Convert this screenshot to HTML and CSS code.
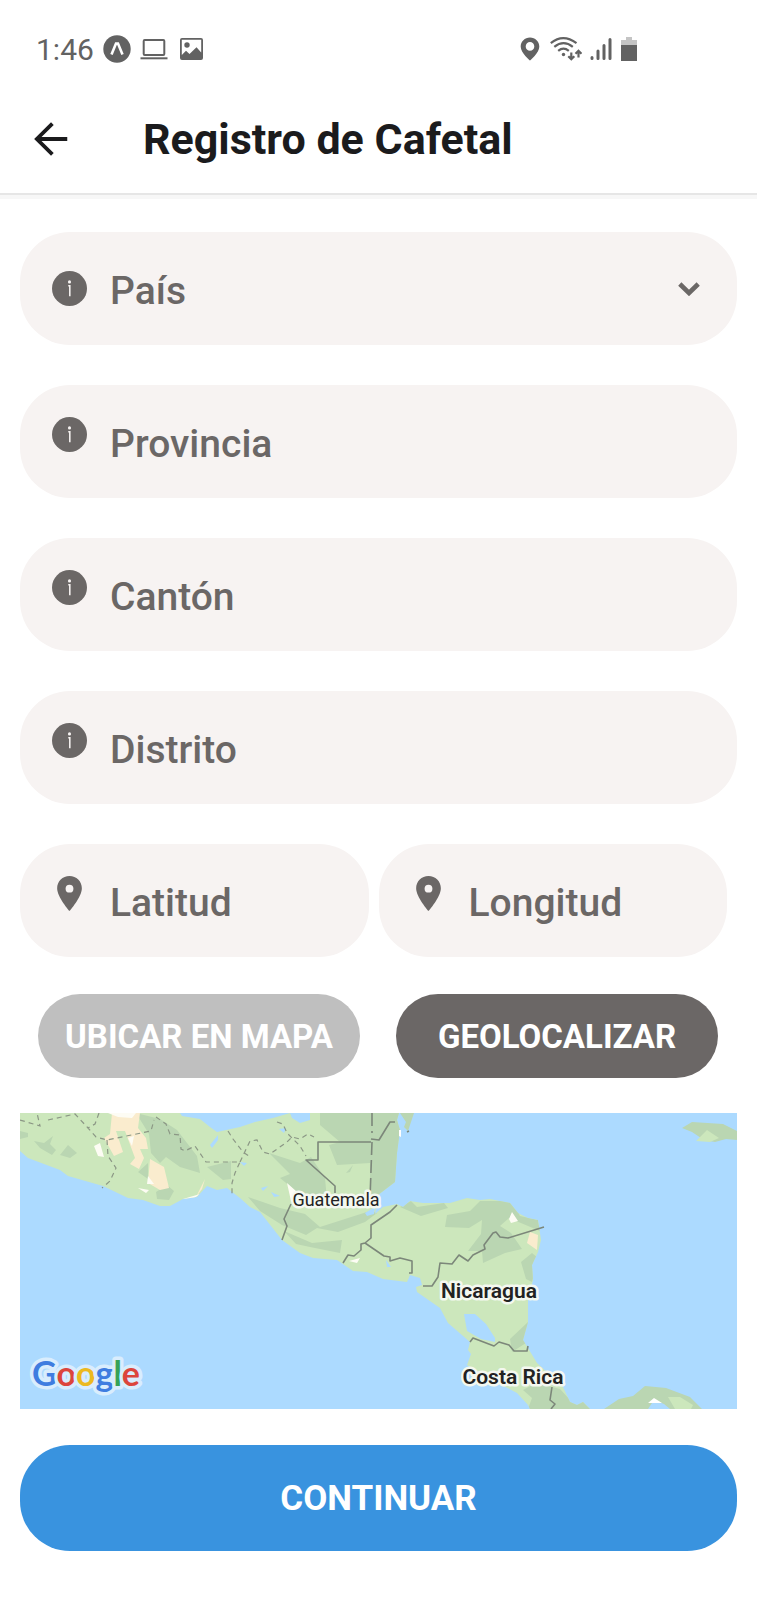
FILE: index.html
```html
<!DOCTYPE html>
<html lang="es">
<head>
<meta charset="utf-8">
<meta name="viewport" content="width=device-width, initial-scale=1">
<title>Registro de Cafetal</title>
<link rel="stylesheet" href="styles.css">
</head>
<body>
<svg class="defs" aria-hidden="true">
  <symbol id="info" viewBox="0 0 34 34">
    <circle cx="17" cy="17" r="17"/>
    <circle cx="17" cy="10.600" r="1.500" fill="#f7f3f2"/>
    <path d="M15.800 14.300h1.500v10.200" fill="none" stroke="#f7f3f2" stroke-width="1.500"/>
  </symbol>
  <symbol id="pin" viewBox="0 0 34 34">
    <path fill-rule="evenodd" d="M17 0C10.300 0 5 5.200 5 11.900C5 20.500 17 34 17 34S29 20.500 29 11.900C29 5.200 23.700 0 17 0ZM17 16.100a3.800 3.800 0 1 1 0-7.600a3.800 3.800 0 0 1 0 7.600Z"/>
  </symbol>
</svg>

<div class="status">
  <span class="clock">1:46</span>
  <svg class="expo" viewBox="0 0 28 28" aria-hidden="true"><circle cx="14" cy="14" r="13.700"/><path d="M8.500 19.500L13 8.600h2L19.500 19.500" fill="none" stroke="#fff" stroke-width="2.600"/></svg>
  <svg class="laptop" viewBox="0 0 28 22" aria-hidden="true"><rect x="3.700" y="2" width="20.600" height="15" rx="1" fill="none" stroke="currentColor" stroke-width="2"/><path d="M.5 19.300h27v2H.5z"/></svg>
  <svg class="photo" viewBox="0 0 23 23" aria-hidden="true"><path fill-rule="evenodd" d="M2 0h19a2 2 0 0 1 2 2v18a2 2 0 0 1-2 2H2a2 2 0 0 1-2-2V2A2 2 0 0 1 2 0ZM1.800 1.800V17L6 12.800l3.500 3.200L16.500 9.200l4.700 5.200V1.800Z"/><circle cx="7" cy="7" r="2.700"/></svg>
  <span class="spacer"></span>
  <svg class="place" viewBox="0 0 20 24" aria-hidden="true"><path fill-rule="evenodd" d="M10 .5C4.800.5.700 4.500.700 9.700C.700 15.800 10 23.500 10 23.500S19.300 15.800 19.300 9.700C19.300 4.500 15.200.5 10 .5ZM10 13.700a4.300 4.300 0 1 1 0-8.600a4.300 4.300 0 0 1 0 8.600Z"/></svg>
  <svg class="wifi" viewBox="0 0 32 24" fill="none" stroke="currentColor" stroke-width="2.200" aria-hidden="true"><path d="M.8 6.200Q13-3.800 26.500 6.200M4.300 9.900Q13.500 2.500 22.800 9.900M8.200 13.800Q13.500 9.500 18.800 13.800"/><circle cx="13.500" cy="17.500" r="1.700" fill="currentColor" stroke="none"/><path d="M21.300 15.500v7M18.300 19.300l3 3l3-3M28.500 20.500v-7M25.500 16.700l3-3l3 3"/></svg>
  <svg class="signal" viewBox="0 0 22 24" stroke="currentColor" stroke-width="3" stroke-linecap="round" aria-hidden="true"><path d="M2 20.500v1M8 14v7.500M14 8.500v13M20 2.500v19"/></svg>
  <svg class="battery" viewBox="0 0 16 24" aria-hidden="true"><path fill="#c4c4c4" d="M5 0h6v3h5v6H0V3h5z"/><path d="M0 8h16v16H0z"/></svg>
</div>

<header class="bar">
  <button class="back" type="button" aria-label="Volver"><svg viewBox="0 0 32 32" fill="none" stroke="currentColor" stroke-width="3.600" aria-hidden="true"><path d="M31.300 16H2.500M17.300 1.500L2.700 16L17.300 30.500"/></svg></button>
  <h1 class="title">Registro de Cafetal</h1>
</header>

<form class="form">
  <label class="field field-select">
    <svg class="icon" aria-hidden="true"><use href="#info"/></svg>
    <select class="control" aria-label="País"><option>País</option></select>
    <svg class="chevron" viewBox="0 0 22 14" fill="none" stroke="currentColor" stroke-width="4.600" aria-hidden="true"><path d="M1.800 2L11 11L20.200 2"/></svg>
  </label>
  <label class="field"><svg class="icon" aria-hidden="true"><use href="#info"/></svg><input class="control" type="text" placeholder="Provincia" aria-label="Provincia"></label>
  <label class="field"><svg class="icon" aria-hidden="true"><use href="#info"/></svg><input class="control" type="text" placeholder="Cantón" aria-label="Cantón"></label>
  <label class="field"><svg class="icon" aria-hidden="true"><use href="#info"/></svg><input class="control" type="text" placeholder="Distrito" aria-label="Distrito"></label>
  <div class="coords">
    <label class="field"><svg class="icon" aria-hidden="true"><use href="#pin"/></svg><input class="control" type="text" placeholder="Latitud" aria-label="Latitud"></label>
    <label class="field"><svg class="icon" aria-hidden="true"><use href="#pin"/></svg><input class="control" type="text" placeholder="Longitud" aria-label="Longitud"></label>
  </div>
  <div class="actions">
    <button class="btn btn-light" type="button">UBICAR EN MAPA</button>
    <button class="btn btn-dark" type="button">GEOLOCALIZAR</button>
  </div>

  <svg class="map" viewBox="0 0 717 296" role="img" aria-label="Mapa de Centroamérica">
    <rect width="717" height="296" fill="#acdaff"/>
    <clipPath id="land"><path id="coast" d="M0 0H160L162 3L180 6L190 14L197 19L220 14L235 9L253 5L270 0L272 5L280 10L290 7V0H379L377 7L380 17L377 40L375 69L358 82L357 90L355 101L363 94L377 91L383 94L390 88L403 90L430 90L447 85L460 87L470 86L490 90L498 100L508 105L518 107L521 127L518 139L512 152L513 167L508 187V209L503 227L508 235L517 250L543 274L550 289L557 292L563 289L570 296H510L508 292L497 280L467 264L447 252L451 241L448 237L450 229L428 210L420 195L397 179L396 174L402 172L400 165L390 162L387 169L363 166L347 159L333 158L317 147L293 145L280 140L262 127L240 99L230 94L220 85L207 75L197 77L187 73L177 84L163 86L150 93L140 93L123 87L108 85L83 73L48 63L40 57L8 45L0 38Z"/></clipPath>
    <use href="#coast" fill="#cce7bc"/>
    <g clip-path="url(#land)">
      <g fill="#bad6b2">
        <path d="M300 0H380V90L350 90V50L317 52L309 32L320 29L300 12Z"/>
        <path d="M0 18L8 20V24L0 26ZM14 28L24 30L33 23L30 31L36 37L32 42L20 35ZM40 42L48 32L57 40L50 45Z"/>
        <path d="M116 0L140 6L157 17L177 43L180 60L160 54L146 44L140 50L131 40L129 21Z"/>
        <path d="M118 59L128 50V66ZM136 79L147 72L154 78L149 87L137 86ZM187 54L211 48V66L203 67Z"/>
        <path d="M249 40L280 50L291 44L305 65L307 87L282 83L260 65L270 61Z"/>
        <path d="M228 84L260 95L285 101L300 114L350 98L357 100L345 109L318 119L297 115L286 122L262 112L240 98Z"/>
        <path d="M264 118L292 130L322 127L320 140L290 134L276 131Z"/>
        <path d="M380 94L391 88L397 94L424 90L428 95L401 103Z"/>
        <path d="M427 102L450 98L460 88L492 88L500 103L518 107L520 118L489 105L480 113L491 120L502 136L485 140L463 150L462 138L448 138L461 121L462 107L449 115L425 114Z"/>
        <path d="M501 149L512 140L518 145L512 169L506 166ZM508 209L509 228L492 239L490 226Z"/>
        <path d="M503 277L516 270L540 276L552 289L568 288L572 296H508L512 285ZM326 60L333 52L330 59Z"/>
      </g>
      <g fill="#faecce">
        <path d="M92 0H120L118 15L126 25L128 36L120 36L124 45L119 56L110 51L115 45L105 18L96 18L103 39L94 43L84 25L90 21Z"/>
        <path d="M130 46L144 54L149 75L140 77L128 70ZM176 84L185 66L182 76Z"/>
        <path d="M510 119L518 122L517 137L507 130Z"/>
      </g>
      <g fill="#fdfcf4">
        <path d="M88 0H116L112 5L98 4ZM74 33L80 30L84 44L78 43ZM108 25L114 23L112 33ZM118 75L129 77L126 80ZM128 63L134 71L127 71ZM267 70L277 79V92L271 88ZM489 106L492 99L498 108L491 110ZM329 148L340 145L337 150ZM163 86L180 81L173 86Z"/>
      </g>
      <g fill="#acdaff">
        <path d="M190 32L198 22V27L192 35ZM241 75L248 73L243 78ZM251 79L260 83L254 84ZM345 100L355 94L354 101L347 103ZM444 201L455 201L466 211L475 225L475 229L461 226L447 218Z"/>
        <path d="M220 49L227 50L224 53ZM259 16L266 15L264 20ZM366 147L371 154L367 154Z"/>
      </g>
    </g>
    <g fill="#bad6b2">
      <path d="M380 0H394L388 18L384 14L386 9ZM662 15L672 9L703 11L717 18V27L706 26L695 29L684 27L672 19Z"/>
      <path d="M584 296L599 286L613 283L625 273L646 275L670 284L682 296Z"/>
    </g>
    <path fill="#cce7bc" d="M676 28L687 17L699 25L690 29ZM648 284L660 284L673 292L671 296L655 296Z"/>
    <path fill="#acdaff" d="M628 296L634 287L644 291L650 296Z"/>
    <path fill="#fff" d="M628 290L634 285L642 290ZM379 17h2v7l-2-1Z"/>
    <g fill="none" stroke="#8b9785" stroke-width="1.200" stroke-dasharray="5 4">
      <path d="M0 7L20 13L17 0M28 7L55 1L68 15L76 24L87 27L131 18L134 7M79 0L75 11L68 15M87 27L88 43L96 55L90 68L82 75M136 4L146 11L150 21L160 22L161 36L165 38L175 33L186 49H220L215 60L212 70V84M208 18L213 26L223 39L229 43"/>
      <path d="M220 49L230 28L237 27L243 39L250 41L267 29L272 24L280 26L288 21L294 24M257 9L263 11L267 20L280 33L286 43"/>
    </g>
    <g fill="none" stroke="#7c877a" stroke-width="1.600" stroke-linejoin="round">
      <path d="M351 29H298V47H286L315 73V80M351 26L359 27L370 9H375M271 91L264 106L267 113L262 127M377 92L370 99L351 112V125L345 130L364 143L370 144V148L380 145L392 148V160H389M345 130L341 131V137L334 143L328 142L323 150M403 173H412L418 164L420 150L432 151L439 142L448 148L453 142L465 136L464 132L473 120L476 119L480 124L488 125L524 114M450 229L453 225L474 233L479 229L489 232L494 238H507L508 233M532 274L530 287L535 291L531 296M387 19L389 18"/>
      <path d="M352 0V20M352 29L350 86" stroke-dasharray="13 5"/>
    </g>
    <g class="place-names" text-anchor="middle">
      <text x="316" y="93">Guatemala</text>
      <text class="strong" x="469" y="185">Nicaragua</text>
      <text class="strong" x="493" y="271">Costa Rica</text>
    </g>
    <text class="logo" x="12" y="273"><tspan fill="#3f7de0">G</tspan><tspan fill="#dc453c">o</tspan><tspan fill="#ecb91f">o</tspan><tspan fill="#3f7de0">g</tspan><tspan fill="#36a257">l</tspan><tspan fill="#dc453c">e</tspan></text>
  </svg>

  <button class="btn btn-primary" type="submit">CONTINUAR</button>
</form>
</body>
</html>
```

FILE: styles.css
```css
* {
  box-sizing: border-box;
}

body {
  margin: 0;
  background: #fff;
  color: #6b6766;
  font-family: Roboto, "Liberation Sans", sans-serif;
}

button,
input,
select {
  font: inherit;
  color: inherit;
  border: 0;
  margin: 0;
  padding: 0;
  background: none;
}

.defs {
  display: block;
  width: 0;
  height: 0;
}

/* Phone status bar */
.status {
  display: flex;
  align-items: center;
  height: 98px;
  padding: 0 120px 0 36px;
  color: #626262;
  fill: #626262;
}

.clock {
  padding-top: 2px;
  font-size: 30px;
  line-height: 36px;
}

.status svg {
  flex: none;
}

.expo {
  width: 28px;
  height: 28px;
  margin-left: 9px;
}

.laptop {
  width: 28px;
  height: 22px;
  margin-left: 9px;
}

.photo {
  width: 23px;
  height: 23px;
  margin-left: 12px;
}

.spacer {
  flex: 1;
}

.place {
  width: 20px;
  height: 24px;
}

.wifi {
  width: 32px;
  height: 24px;
  margin-left: 10px;
}

.signal {
  width: 22px;
  height: 24px;
  margin-left: 8px;
}

.battery {
  width: 16px;
  height: 24px;
  margin-left: 9px;
}

/* Title bar */
.bar {
  display: flex;
  align-items: center;
  height: 95px;
  padding: 0 34px 14px;
  color: #1b1b1d;
  box-shadow: 0 2px 0 #e6e6e6, 0 6px 0 #f7f7f7;
}

.back {
  display: flex;
  margin-right: 75px;
}

.back svg {
  width: 34px;
  height: 34px;
}

.title {
  margin: 0;
  font-size: 43px;
  line-height: 52px;
  font-weight: 700;
}

/* Form */
.form {
  display: flex;
  flex-direction: column;
  padding: 39px 20px 48px;
}

.field {
  display: flex;
  flex: 1;
  align-items: center;
  gap: 23px;
  min-width: 0;
  min-height: 113px;
  margin-bottom: 40px;
  padding: 0 32px;
  border-radius: 50px;
  background: #f7f3f2;
}

.icon {
  flex: none;
  align-self: flex-start;
  width: 35px;
  height: 35px;
  margin-top: 32px;
  fill: #6b6766;
}

.field-select .icon {
  align-self: center;
  margin-top: 0;
}

.control {
  flex: 1;
  min-width: 0;
  width: 100%;
  height: 64px;
  padding-top: 4px;
  font-size: 39px;
  font-weight: 500;
  appearance: none;
  outline: none;
}

.control::placeholder {
  color: #6b6766;
  opacity: 1;
}

.chevron {
  flex: none;
  width: 22px;
  height: 14px;
  margin-right: 5px;
}

.coords {
  display: flex;
  gap: 10px;
  padding-right: 10px;
}

.coords .field {
  margin-bottom: 37px;
}

.actions {
  display: grid;
  grid-template-columns: 1fr 1fr;
  gap: 36px;
  padding: 0 19px 0 18px;
}

.btn {
  height: 84px;
  padding-top: 2px;
  border-radius: 42px;
  color: #fff;
  font-size: 33px;
  line-height: 40px;
  font-weight: 700;
  white-space: nowrap;
}

.btn-light {
  background: #bfbfbf;
}

.btn-dark {
  background: #6b6766;
}

.btn-primary {
  height: 106px;
  border-radius: 50px;
  background: #3993df;
  font-size: 35px;
}

.map {
  display: block;
  width: 100%;
  height: auto;
  margin: 35px 0 36px;
}

.place-names {
  fill: #222;
  stroke: #f4f8f0;
  stroke-width: 5px;
  stroke-linejoin: round;
  paint-order: stroke;
  font-size: 18px;
}

.strong {
  font-size: 21px;
  font-weight: 600;
}

.logo {
  font-family: Lato, sans-serif;
  font-size: 34px;
  font-weight: 700;
  stroke: #d9edfd;
  stroke-width: 7px;
  stroke-linejoin: round;
  paint-order: stroke;
}
```
